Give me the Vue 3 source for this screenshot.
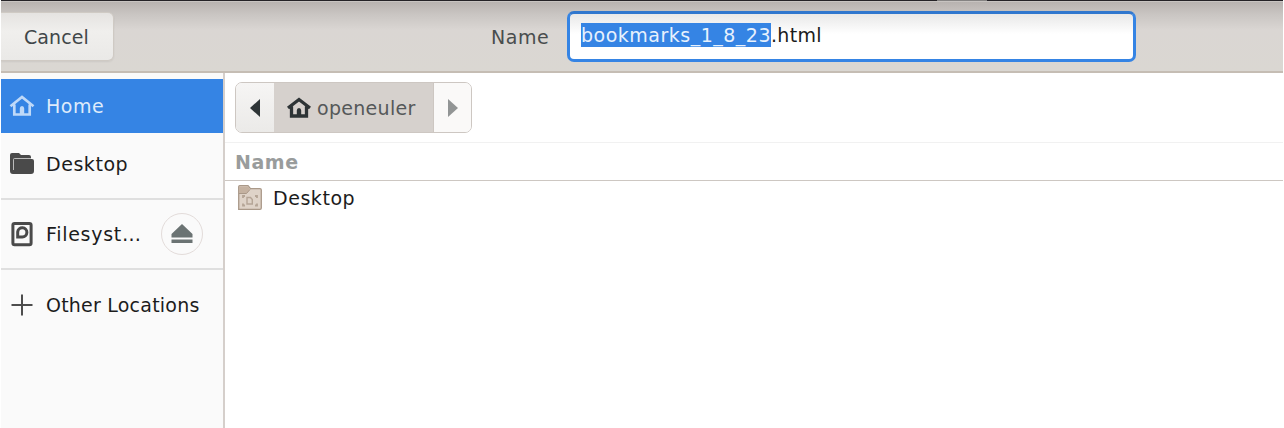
<script setup>
const fileStem = 'bookmarks_1_8_23'
const fileExtension = '.html'
</script>

<template>
  <main class="dialog">
    <div class="backdrop"><i></i></div>
    <header class="toolbar">
      <button class="cancel"><span>Cancel</span></button>
      <label class="name-label" for="filename">Name</label>
      <div id="filename" class="filename"><span class="selected">{{ fileStem }}</span><span class="extension">{{ fileExtension }}</span></div>
    </header>
    <div class="body">
      <nav class="sidebar">
        <div class="place home">
          <svg class="icon" width="26" height="24" viewBox="0 0 26 24">
            <path d="M1.500 12.200 13 3l11.500 9.200M5.300 10.500v10h15.400v-10" fill="none" stroke="currentColor" stroke-width="2.700" />
            <path d="M10.800 14.500q0-2.500 2.200-2.500t2.200 2.500V21h-4.400z" fill="currentColor" />
          </svg>
          <span>Home</span>
        </div>
        <div class="place desktop">
          <svg class="icon" width="26" height="24" viewBox="0 0 26 24">
            <path d="M1 3q0-2 2-2h7l2 2h8q2 0 2 2v2h1q2 0 2 2v10q0 3-3 3H4q-3 0-3-3z" fill="#4a4a4a" />
            <path d="M4.500 18V7.500q0-1 1-1H22" fill="none" stroke="#d8d8d8" stroke-width=".8" />
          </svg>
          <span>Desktop</span>
        </div>
        <div class="place filesystem">
          <svg class="icon" width="26" height="26" viewBox="0 0 26 26">
            <rect x="3.900" y="2.400" width="18.200" height="21.400" rx="1.700" fill="none" stroke="#4a4a4a" stroke-width="3" />
            <path d="M8.700 16V11a4.600 4.600 0 1 1 4.600 5z" fill="none" stroke="#4a4a4a" stroke-width="3" />
          </svg>
          <span>Filesyst…</span>
          <button class="eject">
            <svg width="22" height="20" viewBox="0 0 22 20">
              <path d="M11 0 21.500 10v3.500H.5V10zM.5 15.500h21V19H.5z" fill="#6b7373" />
            </svg>
          </button>
        </div>
        <div class="place other">
          <svg class="icon" width="26" height="24" viewBox="0 0 26 24">
            <path d="M2.500 11h21M13 .5v21" stroke="#4d4d4d" stroke-width="2" />
          </svg>
          <span>Other Locations</span>
        </div>
      </nav>
      <section class="content">
        <div class="path-row">
          <div class="pathbar">
            <button class="back">
              <svg width="10" height="18" viewBox="0 0 10 18"><path d="M10 0v18L0 9z" fill="#2e3436" /></svg>
            </button>
            <button class="crumb">
              <svg width="26" height="22" viewBox="0 0 26 22">
                <path d="M2 11 13 2.500 24 11M5.500 9.500v9.500h15V9.500" fill="none" stroke="#2e3436" stroke-width="3.300" />
                <path d="M10.800 13.500q0-2.500 2.200-2.500t2.200 2.500V20h-4.400z" fill="#2e3436" />
              </svg>
              <span>openeuler</span>
            </button>
            <button class="forward">
              <svg width="10" height="18" viewBox="0 0 10 18"><path d="M0 0v18l10-9z" fill="#929595" /></svg>
            </button>
          </div>
        </div>
        <div class="column-title"><span>Name</span></div>
        <div class="file">
          <svg width="24" height="25" viewBox="0 0 24 25">
            <path d="M.7 1.700q0-1 1-1H10l2.500 3H22q1.300 0 1.300 1.300v18q0 1.300-1.300 1.300H.7z" fill="#dfd3c8" stroke="#aa9989" stroke-width="1.300" />
            <path d="M1 1.500h9.300L12 4.500 8.500 8.500H1z" fill="#c5b2a1" />
            <path d="M1 8.500h7.500l3.500-4" fill="none" stroke="#aa9989" />
            <path d="M9 12.500h3.500l1.800 2v4.500H9z" fill="none" stroke="#b5a596" stroke-width="1.400" />
            <path d="M5 13V11h2M17 11h2v2M5 18.500v2h2M17 20.500h2v-2" fill="none" stroke="#b5a596" stroke-width="1.800" />
          </svg>
          <span>Desktop</span>
        </div>
      </section>
    </div>
  </main>
</template>

<style>
body {
  margin: 0;
  overflow: hidden;
  background: #fff;
}
</style>

<style scoped>
* {
  box-sizing: border-box;
}
.dialog {
  width: 1282px;
  height: 428px;
  margin-left: 1px;
  display: flex;
  flex-direction: column;
  overflow: hidden;
  font: 19px/24px "DejaVu Sans", sans-serif;
  letter-spacing: 0.55px;
  color: #1c1c1c;
}
button {
  font: inherit;
  letter-spacing: inherit;
  padding: 0;
  margin: 0;
  border: 0;
}
svg {
  display: block;
  flex: none;
}
.backdrop {
  height: 1px;
  background: #242226;
  flex: none;
}
.backdrop i {
  display: block;
  width: 50px;
  height: 1px;
  margin-left: 936px;
  background: #858382;
}
.toolbar {
  height: 72px;
  flex: none;
  display: flex;
  align-items: flex-start;
  border-top: 1px solid #c8c4c1;
  border-bottom: 2px solid #c5bdb4;
  background: linear-gradient(#b8b3b0 0, #c9c5c2 12px, #dad6d3 28px, #dad7d2 69px);
}
.cancel {
  width: 113px;
  height: 49px;
  margin-top: 10px;
  padding: 0 0 0 23px;
  text-align: left;
  letter-spacing: 0.1px;
  color: #414749;
  border: solid #cfcac4;
  border-width: 1px 1px 1px 0;
  border-radius: 0 6px 6px 0;
  background: linear-gradient(#e5e3e1, #f0efed 40%, #eae9e7);
  box-shadow: 0 1px 2px #0001;
}
.name-label {
  width: 77px;
  margin: 23px 0 0 376px;
  padding-left: 1px;
  color: #494d4e;
}
.filename {
  width: 569px;
  height: 51px;
  margin-top: 9px;
  padding: 9px 0 0 11px;
  white-space: nowrap;
  border: 3px solid #3584e4;
  border-top-color: #3077ce;
  border-radius: 7px;
  background: linear-gradient(#e8e8e8, #fff 20px);
}
.filename span {
  display: inline-block;
  height: 24px;
  line-height: 24px;
}
.filename .selected {
  color: #e7f1fd;
  background: #3584e4;
  letter-spacing: 0.5px;
}
.filename .extension {
  letter-spacing: 0.3px;
}
.body {
  flex: 1;
  display: flex;
  min-height: 0;
}
.sidebar {
  width: 224px;
  flex: none;
  padding-top: 6px;
  background: #fafafa;
  border-right: 2px solid #d5cfcb;
}
.place {
  display: flex;
  align-items: center;
  white-space: nowrap;
}
.place .icon {
  margin: 0 11px 0 8px;
}
.home {
  height: 54px;
  color: #deebfb;
  background: #3584e4;
}
.home .icon {
  color: #bfd9f8;
}
.desktop {
  height: 65px;
  padding-bottom: 3px;
}
.desktop span {
  padding-bottom: 1px;
}
.filesystem {
  height: 72px;
  border: solid #dfdfdf;
  border-width: 2px 0;
}
.filesystem > span {
  letter-spacing: 0.7px;
}
.eject {
  width: 42px;
  height: 42px;
  margin-left: auto;
  margin-right: 20px;
  display: grid;
  place-items: center;
  border: 1px solid #e3dcda;
  border-radius: 50%;
  background: #fafafa;
}
.other {
  height: 72px;
  letter-spacing: 0.22px;
}
.other span {
  padding-bottom: 2px;
}
.content {
  flex: 1;
  background: #fff;
}
.path-row {
  height: 70px;
  padding: 9px 0 0 10px;
  border-bottom: 1px solid #f1f1f1;
}
.pathbar {
  width: 237px;
  height: 51px;
  display: flex;
  border: 1px solid #cdc7c2;
  border-radius: 7px;
  overflow: hidden;
}
.pathbar button {
  display: flex;
  align-items: center;
}
.back {
  width: 38px;
  justify-content: center;
  background: linear-gradient(#f6f5f4, #ebeae8);
}
.pathbar .crumb {
  flex: 1;
  padding-left: 12px;
  gap: 5px;
  letter-spacing: 0.3px;
  color: #555859;
  background: #d6d1cd;
}
.forward {
  width: 38px;
  justify-content: center;
  border-left: 1px solid #cdc7c2;
  background: #faf9f8;
}
.column-title {
  height: 38px;
  padding: 7px 0 0 10px;
  font-weight: bold;
  color: #999c9c;
  border-bottom: 1px solid #cdc7c2;
}
.file {
  display: flex;
  align-items: center;
  height: 33px;
  padding-left: 13px;
  gap: 11px;
}
.file span {
  padding-top: 1px;
}
</style>
